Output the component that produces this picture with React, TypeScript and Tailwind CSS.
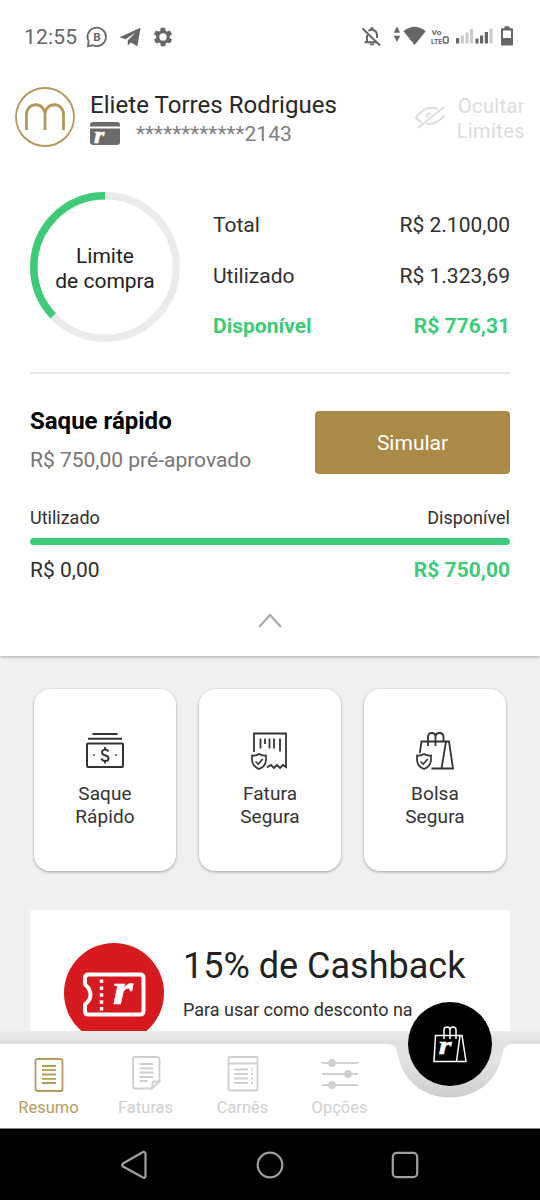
import type { ReactNode } from 'react';

const GREEN = "#3ecb78";

export default function App() {
  return (
    <div className="relative flex flex-col w-[540px] h-[1200px] overflow-hidden bg-[#f0f0f0] font-['Roboto',sans-serif] text-[#2f2f2f]">
      {/*White top panel*/}
      <div className="flex flex-col h-[656px] shrink-0 bg-white shadow-[0_1px_3px_rgba(0,0,0,0.3)]">
        <StatusBar />
        <Header />
        <Limits />
        <QuickWithdraw />
      </div>

      {/*Shortcuts*/}
      <div className="flex gap-[23px] pl-[34px] pt-[33px]">
        <Shortcut label={<>Saque<br />Rápido</>} icon={<MoneyIcon />} />
        <Shortcut label={<>Fatura<br />Segura</>} icon={<InvoiceShieldIcon />} />
        <Shortcut label={<>Bolsa<br />Segura</>} icon={<BagShieldIcon />} />
      </div>

      {/*Cashback banner*/}
      <div className="flex-1 min-h-0 overflow-hidden mt-[39px] mx-[30px] bg-white rounded-t-[3px]">
        <div className="flex gap-[19px] pl-[34px] pt-[33px]">
          <TicketBadge />
          <div className="flex flex-col pt-0.5">
            <span className="text-[36px] leading-[42px] whitespace-nowrap text-[#222]">15% de Cashback</span>
            <span className="mt-[12px] text-[18px] leading-[22px] whitespace-nowrap">Para usar como desconto na</span>
          </div>
        </div>
      </div>

      <TabBar />
      <SystemNav />
    </div>
  );
}

const StatusBar = () => (
  <div className="flex items-center justify-between h-[73px] shrink-0 pl-6 pr-[25px] text-[#666]">
    <div className="flex items-center">
      <span className="w-[62px] text-[21px] leading-6 tracking-[0.2px]">12:55</span>
      <svg width="22" height="22" viewBox="0 0 22 22" fill="none" stroke="currentColor" strokeWidth="1.8">
        <path d="M2 20.2 2.600 15.2A9.2 9.2 0 1 1 7 19.3Z" />
        <text x="11" y="15" textAnchor="middle" fontSize="11.5" fontWeight="700" fill="currentColor" stroke="none">B</text>
      </svg>
      <svg className="ml-[11px]" width="22" height="20" viewBox="0 0 22 20" fill="currentColor">
        <path d="M0.5 10.2 21.500 0.8 18.4 19.2 11.8 15.4 8.8 18.4V13.4L16.600 5.200 6.600 12.2Z" />
      </svg>
      <svg className="ml-[11px]" width="22" height="22" viewBox="0 0 24 24" fill="currentColor">
        <path fillRule="evenodd" d="M19.4 13a7.5 7.5 0 0 0 0-2l2.1-1.6a.5.5 0 0 0 .1-.6l-2-3.5a.5.5 0 0 0-.6-.2l-2.5 1a7.3 7.3 0 0 0-1.7-1l-.4-2.7a.5.5 0 0 0-.5-.4h-4a.5.5 0 0 0-.5.4l-.4 2.7a7.3 7.3 0 0 0-1.7 1l-2.5-1a.5.5 0 0 0-.6.2l-2 3.5a.5.5 0 0 0 .1.6L4.6 11a7.5 7.5 0 0 0 0 2l-2.1 1.6a.5.5 0 0 0-.1.6l2 3.5c.1.2.4.3.6.2l2.5-1a7.3 7.3 0 0 0 1.7 1l.4 2.7c0 .2.2.4.5.4h4c.3 0 .5-.2.5-.4l.4-2.7a7.3 7.3 0 0 0 1.7-1l2.5 1c.2.1.5 0 .6-.2l2-3.5a.5.5 0 0 0-.1-.6ZM12 16a4 4 0 1 1 0-8 4 4 0 0 1 0 8Z" />
      </svg>
    </div>

    <svg width="154" height="22" viewBox="361 26 154 22" fill="currentColor">
      {/*bell off*/}
      <path d="M367 42V35M368.500 31a5.300 5.300 0 0 1 8.500 3.500V38M364.500 42.300H376M362.500 28.500 380 45.500" fill="none" stroke="currentColor" strokeWidth="2" />
      <path d="M370.500 27.300h3v2.500h-3ZM369.500 43.500h5a2.500 2 0 0 1-5 0Z" />
      {/*data arrows + wifi*/}
      <path d="M397 26.500 400.200 32.800H393.800ZM397 42 400.200 35.800H393.800Z" />
      <path d="M403.500 31.300Q414.500 22 425.700 31.300L414.600 45Z" />
      {/*VoLTE*/}
      <text x="431.500" y="35" fontSize="7" fontWeight="700" textLength="10" lengthAdjust="spacingAndGlyphs">Vo</text>
      <text x="431" y="43.800" fontSize="7" fontWeight="700" textLength="11" lengthAdjust="spacingAndGlyphs">LTE</text>
      <rect x="443.500" y="37" width="4.600" height="6" rx="1" fill="none" stroke="currentColor" strokeWidth="1.500" />
      {/*signal*/}
      <rect x="456" y="38" width="3.200" height="5.500" />
      <path opacity="0.35" d="M460.800 35.500h3v8h-3ZM465.600 32.500h3v11h-3ZM470 29h3v14.500h-3ZM489.500 28.500h3v15h-3Z" />
      <path d="M475.500 38.500h3v5h-3ZM480 35.500h3.200v8H480ZM484.800 32h3.200v11.500h-3.200Z" />
      {/*battery*/}
      <path fillRule="evenodd" d="M504.500 26.200h5v2h2.300q1.200 0 1.200 1.200v15q0 1.200-1.200 1.200h-9.600q-1.200 0-1.200-1.200v-15q0-1.200 1.200-1.200h2.300ZM503 30.400V38h8V30.400Z" />
    </svg>
  </div>
);

const Header = () => (
  <div className="flex items-center h-[88px] shrink-0 pl-[15px] pr-[15px]">
    <svg width="60" height="60" viewBox="0 0 60 60" fill="none" stroke="#b4975a">
      <circle cx="30" cy="30" r="29" strokeWidth="1.8" />
      <path d="M11.500 43V27a9.200 9.200 0 0 1 18.500 0V43M30 27a9.200 9.200 0 0 1 18.500 0V43" strokeWidth="2.800" />
    </svg>
    <div className="flex flex-col ml-[15px] pt-[5px]">
      <span className="text-[24px] leading-[28px] tracking-[0.05px] whitespace-nowrap text-[#262626]">Eliete Torres Rodrigues</span>
      <div className="flex items-center h-[30px]">
        <svg className="mt-[-1px] overflow-visible" width="30" height="23" viewBox="0 0 30 23">
          <path d="M3 0h24q3 0 3 3v1.500H0V3Q0 0 3 0ZM0 6.500h30V20q0 3-3 3H3q-3 0-3-3Z" fill="#6b6b6b" />
          <text x="3.500" y="21.500" transform="scale(1.15 1)" fontFamily="Liberation Serif, serif" fontSize="23" fontWeight="700" fontStyle="italic" fill="#fff" stroke="#fff" strokeWidth="0.500">r</text>
        </svg>
        <span className="ml-4 text-[21px] leading-6 whitespace-nowrap text-[#808080]">************2143</span>
      </div>
    </div>
    <div className="flex items-center gap-3 ml-auto text-[#dcdcdc]">
      <svg width="30" height="24" viewBox="0 0 30 24" fill="none" stroke="currentColor" strokeWidth="2" strokeLinecap="round">
        <path d="M3.500 22.500 28.500 2.500M1 12.500Q10 0 22 3.500M1 12.500Q3 15.500 6 17M29 11Q21 20 12 19M11.500 11.500q1-3 4-3" />
      </svg>
      <span className="mt-1 text-[20px] leading-[25px] tracking-[0.4px] text-right">Ocultar<br />Limites</span>
    </div>
  </div>
);

const Limits = () => {
  const r = 71.2;
  const circ = 2 * Math.PI * r;
  const available = 776.31 / 2100;
  return (
    <div className="flex mx-[30px] pt-[31px] h-[213px] shrink-0 border-b-2 border-[#e6e6e6]">
      <div className="relative w-[150px] h-[150px]">
        <svg width="150" height="150" viewBox="0 0 150 150" fill="none" strokeWidth="7.500">
          <circle cx="75" cy="75" r={r} stroke="#ebebeb" />
          <circle cx="75" cy="75" r={r} stroke={GREEN} strokeDasharray={`${circ * available} ${circ}`} transform="matrix(0 -1 -1 0 150 150)" />
        </svg>
        <span className="absolute inset-0 flex items-center justify-center pt-[3px] text-center text-[21px] leading-[25px] text-[#222]">Limite<br />de compra</span>
      </div>
      <div className="flex flex-col flex-1 ml-[33px] pt-2 text-[21px] leading-[50.500px]">
        <Row label="Total" value="R$ 2.100,00" />
        <Row label="Utilizado" value="R$ 1.323,69" />
        <Row label="Disponível" value="R$ 776,31" highlight />
      </div>
    </div>
  );
};

const Row = (props: { label: string; value: string; highlight?: boolean }) => (
  <div className={`flex justify-between ${props.highlight ? 'font-bold text-[#3ecb78]' : ''}`}>
    <span>{props.label}</span>
    <span>{props.value}</span>
  </div>
);

const QuickWithdraw = () => (
  <div className="flex flex-col px-[30px] pt-[37px]">
    <div className="flex justify-between h-[63px]">
      <div className="flex flex-col">
        <span className="mt-[-5px] font-bold text-[24px] leading-[30px] text-black">Saque rápido</span>
        <span className="mt-[10px] text-[21px] leading-[28px] text-[#757575]">R$ 750,00 pré-aprovado</span>
      </div>
      <button className="w-[195px] h-[63px] pt-[3px] rounded bg-[#ab8946] text-white text-[21px]">Simular</button>
    </div>

    {/*Usage bar*/}
    <div className="flex justify-between mt-8 text-[18px] leading-6">
      <span>Utilizado</span>
      <span>Disponível</span>
    </div>
    <div className="h-[7px] mt-[8px] rounded-full bg-[#3ecb78]"></div>
    <div className="flex justify-between mt-[13px] text-[21px] leading-6">
      <span>R$ 0,00</span>
      <span className="font-bold text-[#3ecb78]">R$ 750,00</span>
    </div>

    <svg className="self-center mt-[31px]" width="24" height="15" viewBox="0 0 24 15" fill="none" stroke="#aaa" strokeWidth="2.200">
      <path d="M1 14 12 2 23 14" />
    </svg>
  </div>
);

const Shortcut = (props: { label: ReactNode; icon: ReactNode }) => (
  <div className="flex flex-col items-center w-[142px] h-[182px] pt-[42px] rounded-2xl bg-white shadow-[0_1px_3px_rgba(0,0,0,0.35)]">
    {props.icon}
    <span className="mt-3 text-[19px] leading-[22.500px] tracking-[0.1px] text-center text-[#333]">{props.label}</span>
  </div>
);

const MoneyIcon = () => (
  <svg width="40" height="40" viewBox="0 0 40 40" fill="none" stroke="#333" strokeWidth="2">
    <path d="M7.500 3h25M3 7.800h34" />
    <rect x="2" y="12.500" width="36" height="23.500" rx="1" />
    <path d="M23.500 20.500Q22 18.300 19.800 18.600 16.800 19 17 21.500 17.300 23.500 20 24.200 23.700 25 23.600 27.600 23.200 30 20.200 30 17.500 30 16.300 27.500M20 16v3M20 29.500v3" strokeWidth="1.900" />
    <path d="M8 24h2M30 24h2" stroke="#777" />
  </svg>
);

const Shield = () => (
  <>
    <path d="M2 24.500Q6 25 9 23 12 25 16 24.500V29Q15.500 35.500 9 38 2.500 35.500 2 29Z" strokeWidth="1.700" />
    <path d="M5.500 30.500 8.300 33 12.800 28" strokeWidth="1.600" />
  </>
);

const InvoiceShieldIcon = () => (
  <svg width="40" height="40" viewBox="0 0 40 40" fill="none" stroke="#333" strokeWidth="1.800">
    <path d="M4 21V2.500H36V36L33 34 30 37 27 34 24 37 21 34 17 36.500" />
    <path d="M10.500 7.500V17.500M15 7.500V13M19.500 7.500V17.500M24 7.500V17.500M30 7.500V20.500" />
    <Shield />
  </svg>
);

const BagShieldIcon = () => (
  <svg width="40" height="40" viewBox="0 0 40 40" fill="none" stroke="#333" strokeWidth="1.800">
    <path d="M4.800 22 6.500 10.500H34L38 37.500H16.500M31 10.500 26.500 37.500" />
    <path d="M13 15V6Q13 2 16.800 2 20.500 2 20.500 6V15M20.500 15V6Q20.500 2 24.500 2 28.500 2 28.500 6V11" />
    <Shield />
  </svg>
);

const TicketBadge = () => (
  <svg className="shrink-0" width="100" height="100" viewBox="0 0 100 100" fill="none">
    <circle cx="50" cy="50" r="50" fill="#d71920" />
    <path d="M24.500 31.500H76Q79.500 31.500 79.500 35V68Q79.500 71.500 76 71.500H24.500Q21 71.500 21 68V61.500Q26.500 57 26.500 51.500 26.500 46 21 41.500V35Q21 31.500 24.500 31.500Z" stroke="#fff" strokeWidth="4" strokeLinejoin="round" />
    <path d="M37.500 36.500V70" stroke="#fff" strokeWidth="3.500" strokeDasharray="3.500 3.400" />
    <text x="42.500" y="61" transform="scale(1.15 1)" fontFamily="Liberation Serif, serif" fontSize="45" fontWeight="700" fontStyle="italic" fill="#fff" stroke="#fff" strokeWidth="0.500">r</text>
  </svg>
);

const TabBar = () => (
  <div className="relative flex h-[98px] shrink-0 pt-[23px]">
    {/*Bar shape with the notch around the bag button*/}
    <svg className="absolute left-0 top-0" width="540" height="98" viewBox="0 0 540 98">
      <defs>
        <linearGradient id="strip" x1="0" y1="0" x2="0" y2="1">
          <stop offset="0" stopColor="#ececec" />
          <stop offset="0.13" stopColor="#e0e0e0" />
          <stop offset="0.3" stopColor="#e3e3e3" />
          <stop offset="0.7" stopColor="#cccccc" />
        </linearGradient>
      </defs>
      <rect width="540" height="98" fill="url(#strip)" />
      <path d="M0 13H387Q394.500 13 397 20C401 49 423 66.500 450 66.500S499 49 503 20Q505.500 13 513 13H540V98H0Z" fill="#fff" />
      <path d="M0 97.500H540" stroke="#888" />
    </svg>
    <Tab label="Resumo" active>
      <rect x="6.500" y="5" width="27" height="32" rx="2" />
      <path d="M13 12h14M13 16.200h14M13 20.500h14M13 24.800h14M13 29h14" />
    </Tab>
    <Tab label="Faturas">
      <path d="M33.500 27V5Q33.500 3 31.500 3H9Q7 3 7 5V32.500Q7 34.500 9 34.500H26M26 34.500 33.500 27.500H28Q26.500 27.500 26.500 29Z" />
      <path d="M13.500 10h14M13.500 14.300h14M13.500 18.500h14M13.500 23h14M13.500 27h8" />
    </Tab>
    <Tab label="Carnês">
      <rect x="5.500" y="3" width="29" height="33.500" rx="1" />
      <path d="M5.500 9.500H34.500M11 15.500h14M11 20h14M11 24.500h14M11 29h14M28 15.500h2M28 20h2M28 24.500h2M28 29h2" />
    </Tab>
    <Tab label="Opções">
      <path d="M2 9h36M2 20h36M2 31h36" />
      <path d="M9 9a3 3 0 1 0 6 0 3 3 0 1 0-6 0M25 20a3 3 0 1 0 6 0 3 3 0 1 0-6 0M9 31a3 3 0 1 0 6 0 3 3 0 1 0-6 0" fill="#cfcfcf" />
    </Tab>

    {/*Floating bag button*/}
    <button className="absolute left-[408px] top-[-29px] flex items-center justify-center w-[84px] h-[84px] rounded-full bg-black">
      <svg width="36" height="38" viewBox="0 0 36 38" fill="none" stroke="#fff" strokeWidth="1.500">
        <path d="M3.500 10.500H30L34 36.500H2ZM28 10.500 24.500 36.500" />
        <path d="M12 14V5Q12 2 15 2 18 2 18 5V14M18 5Q18 2 21 2 24 2 24 5V14" />
        <text x="5" y="29.500" transform="scale(1.3 1)" fontFamily="Liberation Serif, serif" fontSize="26" fontWeight="700" fontStyle="italic" fill="#fff" strokeWidth="0.300">r</text>
      </svg>
    </button>
  </div>
);

const Tab = (props: { label: string; active?: boolean; children: ReactNode }) => (
  <div className={`relative flex flex-col items-center w-[97px] ${props.active ? 'text-[#b89a5e]' : 'text-[#cfcfcf]'}`}>
    <svg width="40" height="40" viewBox="0 0 40 40" fill="none" stroke="currentColor" strokeWidth="1.800">
      {props.children}
    </svg>
    <span className="mt-1 text-[16.500px] leading-5">{props.label}</span>
  </div>
);

const SystemNav = () => (
  <div className="flex items-center justify-between h-[71px] shrink-0 px-[120px] bg-black">
    <svg width="30" height="30" viewBox="0 0 30 30" fill="none" stroke="#a0a0a0" strokeWidth="2.200" strokeLinejoin="round">
      <path d="M25.500 3.500V26.500Q25 28.500 23 27.500L3 16.500Q1.500 15 3 13.500L23 2Q25 1.500 25.500 3.500Z" />
    </svg>
    <svg width="30" height="30" viewBox="0 0 30 30" fill="none" stroke="#a0a0a0" strokeWidth="2.200">
      <circle cx="15" cy="15" r="12.300" />
    </svg>
    <svg width="30" height="30" viewBox="0 0 30 30" fill="none" stroke="#a0a0a0" strokeWidth="2.200">
      <rect x="2.800" y="2.800" width="24.400" height="24.400" rx="4" />
    </svg>
  </div>
);
